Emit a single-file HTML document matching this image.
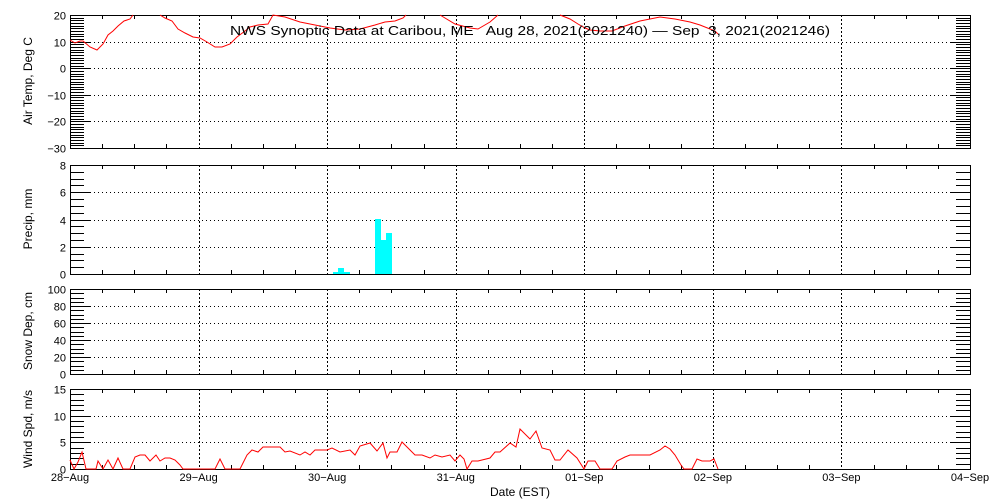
<!DOCTYPE html>
<html><head><meta charset="utf-8"><style>
html,body{margin:0;padding:0;background:#fff;width:1000px;height:500px;overflow:hidden}
svg{display:block}
text{font-family:"Liberation Sans",sans-serif;font-size:11px;fill:#000}
</style></head><body>
<svg id="s" width="1000" height="500" viewBox="0 0 1000 500" xmlns="http://www.w3.org/2000/svg">
<g id="g" shape-rendering="crispEdges"></g>
<polyline fill="none" stroke="#f00" stroke-width="1" points="70,40 75,43 80,41 83,41 90,47 97,50 103,44 108,35 113,31 118,26 124,21 130,19 133,15"/>
<polyline fill="none" stroke="#f00" stroke-width="1" points="160,15 165,18 172,21 178,29 185,33 193,37 200,38 207,42 215,47 222,47 230,44 237,37 245,31 250,27 258,25 268,24 273,15 285,17 300,22 315,25 330,28 345,30 360,29 375,25 385,22 395,21 403,18 406,15"/>
<polyline fill="none" stroke="#f00" stroke-width="1" points="440,15 455,24 470,28 478,29 490,22 498,15"/>
<polyline fill="none" stroke="#f00" stroke-width="1" points="560,15 570,19 578,24 585,28 590,30 600,31 612,31 625,26 640,21 650,19 660,17 675,19 690,22 700,25 710,29 715,31 718,34"/>
<g fill="#00ffff" shape-rendering="crispEdges">
<rect x="333" y="272" width="5" height="2"/><rect x="338" y="268" width="6" height="6"/><rect x="344" y="272" width="6" height="2"/>
<rect x="375" y="219" width="6" height="55"/><rect x="381" y="240" width="5" height="34"/><rect x="386" y="233" width="6" height="41"/>
</g>
<polyline fill="none" stroke="#f00" stroke-width="1" points="70,460 74,469 78,462 82,452 86,469 96,469 98,461 103,469 108,460 113,469 118,458 123,469 130,469 135,457 140,455 145,455 150,461 156,455 160,461 165,458 170,458 175,460 180,465 183,469 215,469 220,459 225,469 240,469 247,455 252,450 258,452 263,447 275,447 280,447 285,452 290,451 300,455 305,452 310,455 315,450 327,450 332,448 340,452 350,450 355,455 360,446 370,443 377,451 383,443 387,458 390,452 397,452 402,442 415,455 422,455 430,458 435,455 442,457 450,455 455,461 460,455 464,459 467,469 472,461 478,461 490,458 495,452 500,452 510,443 516,447 520,429 530,439 536,431 542,448 550,450 555,460 560,460 568,450 577,458 584,469 588,461 595,461 600,469 612,469 617,461 625,457 630,455 640,455 650,455 660,450 665,446 670,449 675,455 681,465 684,469 692,469 697,459 702,461 710,461 714,459 718,469"/>
<text x="530" y="35" text-anchor="middle" style="font-size:13px;white-space:pre" textLength="600" lengthAdjust="spacingAndGlyphs">NWS Synoptic Data at Caribou, ME   Aug 28, 2021(2021240) — Sep  3, 2021(2021246)</text>
<text x="520" y="496" text-anchor="middle" style="font-size:12px">Date (EST)</text>
<text transform="translate(32,81) rotate(-90)" text-anchor="middle" style="font-size:12px">Air Temp, Deg C</text>
<text transform="translate(32,219) rotate(-90)" text-anchor="middle" style="font-size:12px">Precip, mm</text>
<text transform="translate(32,331) rotate(-90)" text-anchor="middle" style="font-size:12px">Snow Dep, cm</text>
<text transform="translate(32,429) rotate(-90)" text-anchor="middle" style="font-size:12px">Wind Spd, m/s</text>
</svg>
<script>
var g=document.getElementById('g'),NS='http://www.w3.org/2000/svg';
function el(n,a,t){var e=document.createElementNS(NS,n);for(var k in a)e.setAttribute(k,a[k]);if(t!==undefined)e.textContent=t;(n=='text'?document.getElementById('s'):g).appendChild(e);return e}
function ln(x1,y1,x2,y2,d){el('line',{x1:x1,y1:y1,x2:x2,y2:y2,stroke:'#000','stroke-width':1,'stroke-dasharray':d||'none'})}
var L=70,R=970,day=900/7;
var P=[{t:15,b:148,min:-30,max:20,minor:1,major:10},{t:165,b:274,min:0,max:8,minor:0.5,major:2},{t:289,b:374,min:0,max:100,minor:5,major:20},{t:389,b:469,min:0,max:15,minor:1,major:5}];
P.forEach(function(p,i){
 var Y=function(v){return p.b-(v-p.min)/(p.max-p.min)*(p.b-p.t)};
 el('rect',{x:L+.5,y:p.t+.5,width:R-L,height:p.b-p.t,fill:'none',stroke:'#000'});
 for(var v=p.min;v<=p.max+1e-9;v+=p.minor){var y=Math.round(Y(v))+.5;var maj=Math.abs(v/p.major-Math.round(v/p.major))<1e-6;
  ln(L,y,L+(maj?20:14),y);ln(R-(maj?20:14),y,R,y);
  if(maj){ if(v>p.min&&v<p.max) ln(L,y,R,y,'1,3');
   var t=el('text',{x:66,y:y+4,'text-anchor':'end'},(v<0?'\u2212'+(-v):String(v)));}
 }
 for(var k=1;k<28;k++){var x=Math.round(L+k*day/4)+.5;
  if(k%4==0) ln(x,p.t,x,p.b,'2,2'); else {ln(x,p.b-4,x,p.b);ln(x,p.t,x,p.t+4);}}
});
var labs=['28-Aug','29-Aug','30-Aug','31-Aug','01-Sep','02-Sep','03-Sep','04-Sep'];
labs.forEach(function(s,k){el('text',{x:L+k*day,y:481,'text-anchor':'middle'},s.replace('-','\u2212'))});
</script>
</body></html>
